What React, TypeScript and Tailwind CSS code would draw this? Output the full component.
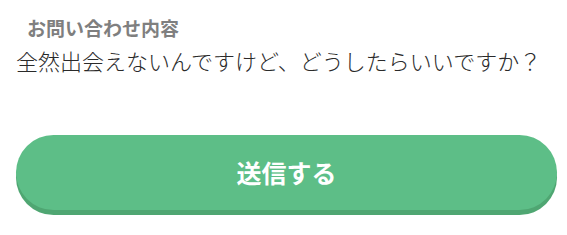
import React from "react";

export default function App() {
  return (
    <div className="w-[567px] h-[235px] bg-white flex flex-col" style={{ fontFamily: '"Noto Sans CJK JP", "Noto Sans", sans-serif' }}>
      <div className="pl-[27px] pt-[15px] text-[19px] leading-[26px] font-bold text-[#7f7f7f]">お問い合わせ内容</div>
      <div className="pl-[16px] pt-[4px] text-[22px] leading-[30px] font-light text-[#2a2a2a]">全然出会えないんですけど、どうしたらいいですか？</div>
      <div className="pl-[16px] pt-[60px]">
        <button className="w-[541px] h-[75px] rounded-full bg-[#5dbe87] shadow-[0_5px_0_#4fa672] flex items-center justify-center text-white font-bold text-[25px]">
          送信する
        </button>
      </div>
    </div>
  );
}
